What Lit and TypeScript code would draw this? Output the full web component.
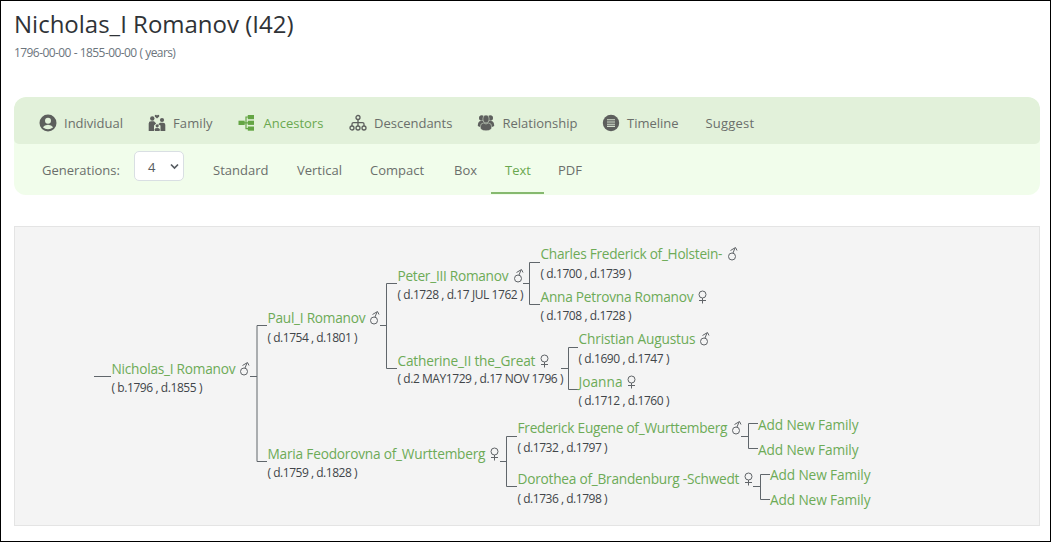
import { LitElement, html, css, svg } from "lit";
import { customElement } from "lit/decorators.js";

type Sex = "m" | "f";
interface Person { x: number; y: number; w: number; name: string; sex?: Sex; sx?: number; dates?: string; dy?: number; dw?: number; }

const people: Person[] = [
  { x: 111.5, y: 374, w: 124, name: "Nicholas_I Romanov", sex: "m", sx: 239.5, dates: "( b.1796 , d.1855 )", dy: 392, dw: 91 },
  { x: 267.5, y: 323, w: 98, name: "Paul_I Romanov", sex: "m", sx: 369.5, dates: "( d.1754 , d.1801 )", dy: 342, dw: 90 },
  { x: 397.5, y: 281, w: 111, name: "Peter_III Romanov", sex: "m", sx: 513.5, dates: "( d.1728 , d.17 JUL 1762 )", dy: 299, dw: 126 },
  { x: 540.5, y: 259, w: 182, name: "Charles Frederick of_Holstein-", sex: "m", sx: 727.5, dates: "( d.1700 , d.1739 )", dy: 278, dw: 91 },
  { x: 540.5, y: 302, w: 153, name: "Anna Petrovna Romanov", sex: "f", sx: 698, dates: "( d.1708 , d.1728 )", dy: 320, dw: 91 },
  { x: 397.5, y: 366, w: 138, name: "Catherine_II the_Great", sex: "f", sx: 540, dates: "( d.2 MAY1729 , d.17 NOV 1796 )", dy: 383, dw: 166 },
  { x: 578.5, y: 344, w: 117, name: "Christian Augustus", sex: "m", sx: 699.5, dates: "( d.1690 , d.1747 )", dy: 363, dw: 91 },
  { x: 578.5, y: 387, w: 44, name: "Joanna", sex: "f", sx: 627, dates: "( d.1712 , d.1760 )", dy: 405, dw: 91 },
  { x: 267.5, y: 459, w: 218, name: "Maria Feodorovna of_Wurttemberg", sex: "f", sx: 490, dates: "( d.1759 , d.1828 )", dy: 477, dw: 90 },
  { x: 517.5, y: 433, w: 210, name: "Frederick Eugene of_Wurttemberg", sex: "m", sx: 731.5, dates: "( d.1732 , d.1797 )", dy: 452, dw: 90 },
  { x: 517.5, y: 484, w: 222, name: "Dorothea of_Brandenburg -Schwedt", sex: "f", sx: 744, dates: "( d.1736 , d.1798 )", dy: 503, dw: 90 },
  { x: 758, y: 430, w: 100.5, name: "Add New Family" },
  { x: 758, y: 455, w: 100.5, name: "Add New Family" },
  { x: 770, y: 480, w: 100.5, name: "Add New Family" },
  { x: 770, y: 505, w: 100.5, name: "Add New Family" },
];

const links = [
  "M94 376.500H111", "M250 376.500H257M267 325.500H257V461.500H267",
  "M380 325.500H387M397 283.500H386.500V368.500H397",
  "M523 283.500H530M540 262.500H529.500V304.500H540",
  "M561 368.500H569M578 347.500H568.500V389.500H578",
  "M500 461.500H507M517 436.500H506.500V486.500H517",
  "M741 436.500H749M758 423.500H748.500V448.500H758",
  "M753 486.500H761M770 474.500H760.500V499.500H770",
];

@customElement("app-root")
export class AppRoot extends LitElement {
  static styles = css`
    :host { display: block; }
    * { box-sizing: border-box; }
    .page { width: 1051px; height: 542px; border: 1px solid #000; background: #fff; padding: 6px 10px 15px 13px; display: flex; flex-direction: column; font-family: "Open Sans", "Noto Sans", sans-serif; overflow: hidden; }
    .title { margin: 0; font-size: 24px; line-height: 34px; font-weight: 400; color: #2f3337; white-space: nowrap; letter-spacing: 0; }
    .life { font-size: 12px; line-height: 16px; color: #6c757d; margin-top: 4px; letter-spacing: -0.58px; word-spacing: 0.3px; white-space: pre; }
    .bars { margin-top: 36px; border-radius: 12px; background: #f1fdeb; height: 98px; overflow: hidden; flex: none; }
    .bar { display: flex; color: #6b6f6b; font-size: 13px; white-space: nowrap; }
    .main { height: 47px; background: #e2f1da; border-radius: 12px 12px 5px 5px; padding-left: 24.5px; align-items: center; padding-top: 5px; }
    .sub { height: 51px; padding-left: 28px; align-items: stretch; }
    .item { display: flex; align-items: center; gap: 7.5px; flex: none; }
    .icon { width: 18px; height: 18px; flex: none; color: #5d5f5d; }
    .active { color: #6aa84f; }
    .active .icon { color: #64a544; }
    .tab { display: flex; align-items: center; flex: none; padding-top: 1px; }
    .current { color: #6aa84f; border-bottom: 2px solid #86b96f; margin-left: -14px; padding: 3px 0 0 14px; height: 50px; }
    .select { width: 50px; height: 30px; margin: 7px 29px 0 -1px; border: 1px solid #d9dfe3; border-radius: 5px; background: #fff; display: flex; align-items: center; justify-content: space-between; padding: 1px 4px 0 13px; color: #555b60; }
    .chev { width: 9px; height: 7px; }
    .panel { margin-top: 31px; height: 300px; border: 1px solid #e4e4e4; background: #f4f4f4; flex: none; }
    .tree { display: block; width: 1024px; height: 298px; }
    .name { font-size: 13.7px; fill: #6dab57; }
    .dates { font-size: 12px; fill: #414549; }
    .link { fill: none; stroke: #60666b; stroke-width: 1; }
    .sex { fill: none; stroke: #606468; stroke-width: 1; }
  `;

  private icon(k: string) {
    const body: Record<string, unknown> = {
      user: svg`<circle cx="9" cy="9" r="8.500" fill="currentColor"/><circle cx="9" cy="6.800" r="3" fill="#e2f1da"/><path d="M3.800 13.300Q5.500 10.700 9 10.700T14.200 13.300Q12 15.300 9 15.300T3.800 13.300Z" fill="#e2f1da"/>`,
      family: svg`<g fill="currentColor"><path d="M9 4.600L6.800 2.500Q6.300.6 8 .7L9 1.500L10 .7Q11.700.6 11.200 2.500Z"/><circle cx="4.300" cy="4.500" r="2.200"/><circle cx="14" cy="6" r="2.100"/><path d="M.7 17V9.500Q.7 7.300 3 7.300H6L8.200 9.500L6 11.500V17ZM17.300 17V10.800Q17.300 8.700 15 8.700H12L10.200 10.200L12.500 11.500V17Z"/><circle cx="9.200" cy="11.800" r="1.600"/><path d="M6.800 17V15.300Q6.800 14 9.200 14T11.700 15.300V17Z"/></g>`,
      anc: svg`<g fill="currentColor"><rect x="0.500" y="6.700" width="6.200" height="4.300"/><rect x="9.800" y="1" width="6.200" height="4.200"/><rect x="9.800" y="6.700" width="6.200" height="4.200"/><rect x="9.800" y="12.500" width="6.200" height="4.200"/></g><path d="M6 8.800H10M10 3H8V14.600H10" fill="none" stroke="currentColor" stroke-width="1.200"/>`,
      desc: svg`<g fill="none" stroke="currentColor" stroke-width="1.300"><circle cx="9" cy="3.500" r="2"/><circle cx="3" cy="14" r="2"/><circle cx="9" cy="14" r="2"/><circle cx="15" cy="14" r="2"/><path d="M9 5.500V12M3 12V10Q3 8.700 4.500 8.700H13.500Q15 8.700 15 10V12"/></g>`,
      rel: svg`<g fill="currentColor"><circle cx="4.700" cy="4" r="2.700"/><circle cx="13.300" cy="4" r="2.700"/><path d="M.8 12Q.8 7 4 7H14Q17.200 7 17.200 12L14 13.500H4Z"/></g><g fill="currentColor" stroke="#e2f1da" stroke-width=".5"><ellipse cx="9" cy="5" rx="3.200" ry="4"/><path d="M3.300 13Q3.300 9 6.500 9Q9 11 11.500 9Q14.700 9 14.700 13Q14.700 16.800 9 16.800T3.300 13Z"/></g>`,
      time: svg`<circle cx="9" cy="9" r="8.200" fill="currentColor"/><path d="M5 5.800H13M5 8H13M5 10.200H13M5 12.400H13" stroke="#d4dfce" stroke-width="1.100"/>`,
    };
    return html`<svg class="icon" viewBox="0 0 18 18">${body[k]}</svg>`;
  }

  private item(k: string, label: string, w: number, ls: number, active = false) {
    return html`<div class="item ${active ? "active" : ""}" style="width:${w}px;letter-spacing:${ls}px">${k ? this.icon(k) : ""}<span>${label}</span></div>`;
  }

  private tab(label: string, w: number, ls = 0, active = false) {
    return html`<div class="tab ${active ? "current" : ""}" style="width:${w}px;letter-spacing:${ls}px">${label}</div>`;
  }

  private sex(p: Person) {
    return p.sex === "m"
      ? svg`<g class="sex" transform="translate(${p.sx} ${p.y - 12.5})"><circle cx="4.500" cy="10" r="3.500"/><path d="M5.500 6.500L7.500 1.500M3 4L8 1L9.500 4"/></g>`
      : svg`<g class="sex" transform="translate(${p.sx} ${p.y - 12.5})"><circle cx="4.500" cy="5" r="3.500"/><path d="M4.500 8.500V14M1 11H8"/></g>`;
  }

  render() {
    return html`<main class="page">
      <h1 class="title">Nicholas_I Romanov (I42)</h1>
      <div class="life">1796-00-00 - 1855-00-00 ( years)</div>
      <nav class="bars">
        <div class="bar main">
          ${this.item("user", "Individual", 109, 0)}
          ${this.item("family", "Family", 90.5, 0.1)}
          ${this.item("anc", "Ancestors", 110.5, 0, true)}
          ${this.item("desc", "Descendants", 128.5, 0)}
          ${this.item("rel", "Relationship", 124.5, 0)}
          ${this.item("time", "Timeline", 104, 0)}
          ${this.item("", "Suggest", 80, 0.2)}
        </div>
        <div class="bar sub">
          ${this.tab("Generations:", 93)}
          <div class="select">4<svg class="chev" viewBox="0 0 9 7"><path d="M1 1.500L4.500 5L8 1.500" fill="none" stroke="#555b60" stroke-width="1.700"/></svg></div>
          ${this.tab("Standard", 84)}
          ${this.tab("Vertical", 73)}
          ${this.tab("Compact", 84)}
          ${this.tab("Box", 51)}
          ${this.tab("Text", 53, 0, true)}
          <div class="tab" style="margin-left:14px">PDF</div>
        </div>
      </nav>
      <section class="panel">
        <svg class="tree" viewBox="15 227 1024 298">
          ${links.map((d) => svg`<path class="link" d=${d}/>`)}
          ${people.map((p) => svg`
            <text class="name" x=${p.x} y=${p.y} textLength=${p.w}>${p.name}</text>
            ${p.sex ? this.sex(p) : ""}
            ${p.dates ? svg`<text class="dates" x=${p.x} y=${p.dy} textLength=${p.dw}>${p.dates}</text>` : ""}`)}
        </svg>
      </section>
    </main>`;
  }
}
